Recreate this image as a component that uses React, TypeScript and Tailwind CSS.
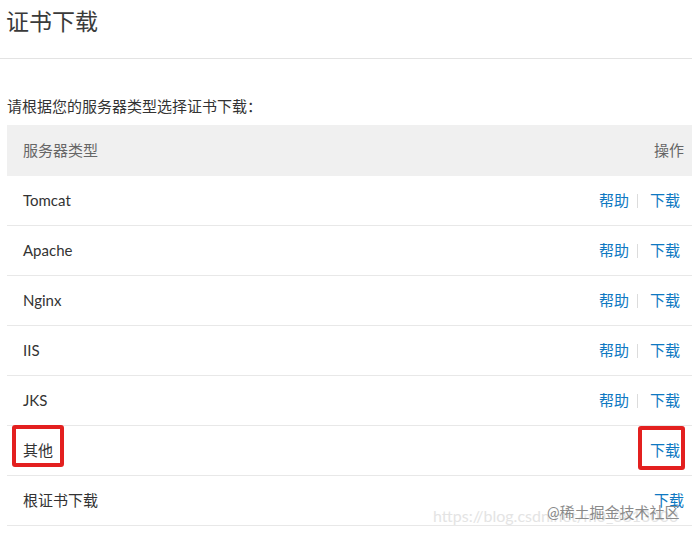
import React from 'react';

const rows = [
  { name: 'Tomcat', help: true },
  { name: 'Apache', help: true },
  { name: 'Nginx', help: true },
  { name: 'IIS', help: true },
  { name: 'JKS', help: true },
  { name: '其他', help: false },
  { name: '根证书下载', help: false, last: true },
];

const font = { fontFamily: 'Lato, "Noto Sans CJK SC", sans-serif' };

export default function App() {
  return (
    <div className="relative w-[692px] h-[535px] bg-white overflow-hidden text-[#333]" style={font}>
      <div className="h-[59px] border-b border-[#e3e3e3] pl-[6px] pt-[4px]">
        <h1 className="text-[23px] leading-[34px] text-[#3a3a3a]">证书下载</h1>
      </div>

      <p className="mt-[35px] pl-[7px] text-[15px] leading-[24px] text-[#333]">请根据您的服务器类型选择证书下载：</p>

      <div className="ml-[7px] mt-[7px]">
        <div className="flex h-[51px] items-center justify-between bg-[#f0f0f0] pl-[16px] pr-[8px] text-[15px] text-[#666]">
          <span>服务器类型</span>
          <span>操作</span>
        </div>
        {rows.map((r) => (
          <div
            key={r.name}
            className="flex h-[50px] items-center justify-between border-b border-[#e8e8e8] pl-[16px] text-[15px]"
          >
            <span className="text-[#333]">{r.name}</span>
            <div className={r.last ? 'flex items-center pr-[8px] text-[#0e78c2]' : 'flex items-center pr-[12px] text-[#0e78c2]'}>
              {r.help && (
                <>
                  <span>帮助</span>
                  <span className="ml-[8px] mr-[12px] h-[14px] w-px bg-[#dcdcdc]" />
                </>
              )}
              <span>下载</span>
            </div>
          </div>
        ))}
      </div>

      {/* red annotation boxes */}
      <div className="absolute left-[12px] top-[425px] h-[42px] w-[52px] rounded-[3px] border-4 border-[#e3201f]" />
      <div className="absolute left-[638px] top-[426px] h-[44px] w-[47px] rounded-[3px] border-4 border-[#e3201f]" />

      {/* watermark */}
      <div className="absolute left-[433px] top-[506px] text-[16px] leading-[20px] text-[#e4e4e4] whitespace-nowrap">
        https://blog.csdn.net/m0_3813000
      </div>
      <div className="absolute left-[547px] top-[502px] text-[15px] leading-[20px] text-[#8a8a8a] whitespace-nowrap">
        @稀土掘金技术社区
      </div>
    </div>
  );
}
